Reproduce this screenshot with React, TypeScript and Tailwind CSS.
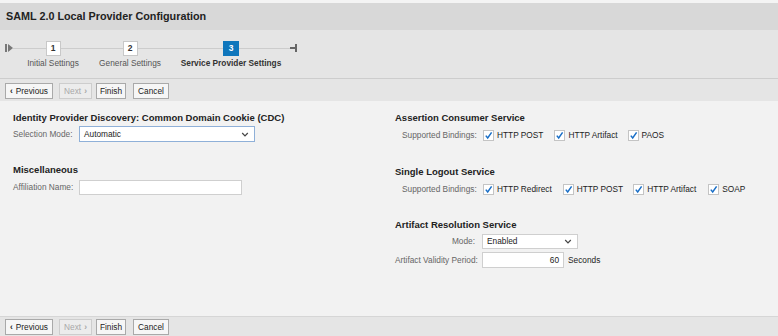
const font = { fontFamily: '"Liberation Sans", Arial, sans-serif' };

function Chevron() {
  return (
    <svg width="8" height="5" viewBox="0 0 8 5" className="shrink-0">
      <path d="M1.2 1 L4 3.8 L6.8 1" fill="none" stroke="#444" strokeWidth="1.2" />
    </svg>
  );
}

function Check() {
  return (
    <span className="inline-flex items-center justify-center w-[11px] h-[11px] bg-white border border-[#c4c4c4] mr-[3px] shrink-0">
      <svg width="9" height="9" viewBox="0 0 9 9">
        <path d="M1.8 4.6 L3.7 7 L7.6 1.4" fill="none" stroke="#1a6fc7" strokeWidth="1.5" />
      </svg>
    </span>
  );
}

function Toolbar() {
  const btn = "h-[16px] flex items-center justify-center border text-[8.3px] leading-none whitespace-nowrap";
  const on = "border-[#a9a9a9] bg-[#f6f6f6] text-[#222]";
  return (
    <div className="flex items-center pl-[5px] h-[16px]">
      <div className={`${btn} ${on} w-[48px]`}>
        <span className="mr-[3px] font-bold">‹</span>Previous
      </div>
      <div className={`${btn} w-[33px] ml-[6px] text-[#a8a8a8] border-[#cdcdcd] bg-[#ececec]`}>
        Next<span className="ml-[3px] font-bold">›</span>
      </div>
      <div className={`${btn} ${on} w-[30px] ml-[4px]`}>Finish</div>
      <div className={`${btn} ${on} w-[36px] ml-[7px]`}>Cancel</div>
    </div>
  );
}

function Step({ n, label, active, w }: { n: number; label: string; active?: boolean; w: string }) {
  return (
    <div className={`flex flex-col items-center ${w}`}>
      <div
        className={`h-[15px] flex items-center justify-center text-[8.5px] font-bold ${
          active
            ? "w-[16px] bg-[#0f76bc] text-white border border-[#0f76bc]"
            : "w-[15px] bg-white text-[#333] border border-[#c8c8c8]"
        }`}
      >
        {n}
      </div>
      <span
        className={`mt-[2px] text-[8.3px] leading-[10px] whitespace-nowrap ${
          active ? "font-bold text-[#333]" : "text-[#555]"
        }`}
      >
        {label}
      </span>
    </div>
  );
}

function Binding({ label, mr = "mr-[12px]" }: { label: string; mr?: string }) {
  return (
    <span className={`flex items-center text-[8.3px] text-[#222] whitespace-nowrap ${mr}`}>
      <Check />
      {label}
    </span>
  );
}

const heading = "text-[9.5px] font-bold text-[#222] leading-[14px] whitespace-nowrap";
const label = "text-[8.3px] text-[#666] whitespace-nowrap";

export default function App() {
  return (
    <div className="w-[778px] h-[336px] bg-[#f2f2f2] flex flex-col" style={font}>
      <div className="h-[3px] bg-[#f4f4f4]" />
      <div className="h-[27px] bg-[#d8d8d8] flex items-center px-[6px]">
        <h1 className="text-[10.8px] font-bold text-[#222]">SAML 2.0 Local Provider Configuration</h1>
      </div>

      <div className="h-[48px] bg-[#e5e5e5] relative flex items-start pt-[11px] pl-[20px]">
        <div className="absolute left-[13px] top-[18px] w-[278px] h-[1px] bg-[#cccccc]" />
        <span className="absolute left-[5px] top-[14px] flex items-center">
          <span className="w-[2px] h-[8px] bg-[#777]" />
          <span className="w-0 h-0 ml-[1px] border-y-[4px] border-y-transparent border-l-[5px] border-l-[#777]" />
        </span>
        <span className="absolute left-[290px] top-[14px] flex items-center">
          <span className="w-[5px] h-[2px] bg-[#666]" />
          <span className="w-[2px] h-[8px] bg-[#666]" />
        </span>
        <div className="relative flex">
          <Step n={1} label="Initial Settings" w="w-[66px]" />
          <Step n={2} label="General Settings" w="w-[78px] ml-[5px]" />
          <Step n={3} label="Service Provider Settings" active w="w-[112px] ml-[6px]" />
        </div>
      </div>

      <div className="border-t border-[#cdcdcd] bg-[#e5e5e5] pt-[4px] pb-[2px]">
        <Toolbar />
      </div>

      <div className="flex-1 flex px-[13px] pt-[10px]">
        <div className="w-[382px]">
          <h2 className={heading}>Identity Provider Discovery: Common Domain Cookie (CDC)</h2>
          <div className="flex items-center mt-[1px] h-[16px]">
            <span className={`w-[66px] ${label}`}>Selection Mode:</span>
            <div className="w-[176px] h-[16px] bg-white border border-[#8fb0d8] flex items-center justify-between pl-[4px] pr-[5px]">
              <span className="text-[8.3px] text-[#222]">Automatic</span>
              <Chevron />
            </div>
          </div>

          <h2 className={`${heading} mt-[21px]`}>Miscellaneous</h2>
          <div className="flex items-center mt-[2px] h-[16px]">
            <span className={`w-[66px] ${label}`}>Affiliation Name:</span>
            <div className="w-[163px] h-[15px] bg-white border border-[#cfcfcf]" />
          </div>
        </div>

        <div className="flex-1">
          <h2 className={heading}>Assertion Consumer Service</h2>
          <div className="flex items-center mt-[2px] h-[16px] pl-[7px]">
            <span className={`w-[81px] ${label}`}>Supported Bindings:</span>
            <Binding label="HTTP POST" mr="mr-[11px]" />
            <Binding label="HTTP Artifact" mr="mr-[10px]" />
            <Binding label="PAOS" />
          </div>

          <h2 className={`${heading} mt-[22px]`}>Single Logout Service</h2>
          <div className="flex items-center mt-[2px] h-[16px] pl-[7px]">
            <span className={`w-[81px] ${label}`}>Supported Bindings:</span>
            <Binding label="HTTP Redirect" mr="mr-[11px]" />
            <Binding label="HTTP POST" mr="mr-[10px]" />
            <Binding label="HTTP Artifact" mr="mr-[12px]" />
            <Binding label="SOAP" />
          </div>

          <h2 className={`${heading} mt-[21px]`}>Artifact Resolution Service</h2>
          <div className="flex items-center mt-[2px] h-[15px]">
            <span className={`w-[80px] text-right mr-[7px] ${label}`}>Mode:</span>
            <div className="w-[96px] h-[15px] bg-white border border-[#cfcfcf] flex items-center justify-between pl-[4px] pr-[5px]">
              <span className="text-[8.3px] text-[#222]">Enabled</span>
              <Chevron />
            </div>
          </div>
          <div className="flex items-center mt-[3px] h-[16px]">
            <span className={`w-[80px] text-right mr-[7px] ${label}`}>Artifact Validity Period:</span>
            <div className="w-[82px] h-[16px] bg-white border border-[#cfcfcf] flex items-center justify-end px-[4px]">
              <span className="text-[8.3px] text-[#222]">60</span>
            </div>
            <span className="text-[8.3px] text-[#222] ml-[4px]">Seconds</span>
          </div>
        </div>
      </div>

      <div className="bg-[#e5e5e5] border-t border-[#d6d6d6] pt-[2px] pb-[1px]">
        <Toolbar />
      </div>
    </div>
  );
}
